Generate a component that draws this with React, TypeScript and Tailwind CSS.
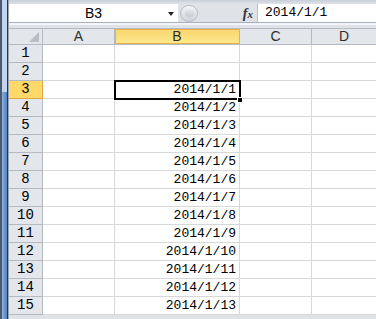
const cols = [
  { key: "A", w: "w-[72px]" },
  { key: "B", w: "w-[125px]" },
  { key: "C", w: "w-[72px]" },
];

const rows = Array.from({ length: 15 }, (_, i) => i + 1);

const cellText = (r: number) => (r >= 3 ? `2014/1/${r - 2}` : "");

const mono = "font-['Liberation_Mono',monospace] text-[13px] text-black";
const sans = "font-['Liberation_Sans',Arial,sans-serif]";

function FormulaBar() {
  return (
    <div className="bg-[#dfe3e8]">
      <div className="h-[4px] bg-gradient-to-b from-[#c9cfd8] to-[#dfe3e8]" />
      <div className="flex h-[18px] items-stretch">
        <div className="relative flex w-[169px] items-center justify-center bg-white">
          <span className={`${sans} text-[14px] text-black`}>B3</span>
          <span className="absolute right-[4px] top-[8px] h-0 w-0 border-x-[3.5px] border-t-[4px] border-x-transparent border-t-[#222]" />
        </div>
        <div className="flex w-[79px] items-center pl-[2px]">
          <div className="flex h-[17px] w-[18px] items-center justify-center rounded-full border border-[#b6bcc4] bg-gradient-to-b from-[#f4f5f7] to-[#cfd4da]">
            <div className="h-[8px] w-[9px] rounded-full bg-gradient-to-b from-[#e9ebee] to-[#c4c9d0]" />
          </div>
          <span className="ml-auto mr-[4px] font-['Liberation_Serif',serif] text-[14px] font-bold italic text-[#333]">
            f<span className="text-[11px]">x</span>
          </span>
        </div>
        <div className="flex flex-1 items-center border-l border-[#b9c0c9] bg-white pl-[7px]">
          <span className={mono}>2014/1/1</span>
        </div>
      </div>
      <div className="h-[1px] bg-[#a9b1bc]" />
      <div className="h-[2px] bg-[#f2f4f7]" />
      <div className="h-[3px] bg-[#dfe3e8]" />
    </div>
  );
}

function HeaderRow() {
  return (
    <div className="flex h-[17px] border-y border-[#b4bac2] bg-[#e3e6ea]">
      <div className="relative w-[34px] border-r border-[#b4bac2]">
        <svg className="absolute bottom-[2px] right-[3px]" width="10" height="10" viewBox="0 0 10 10">
          <polygon points="10,0 10,10 0,10" fill="#b9bec5" />
        </svg>
      </div>
      {cols.map((c) => (
        <div
          key={c.key}
          className={`${c.w} flex items-center justify-center border-r ${
            c.key === "B"
              ? "border-[#e2a63e] bg-gradient-to-b from-[#f9d56e] to-[#fde88d] outline outline-1 -outline-offset-1 outline-[#e8b04a]"
              : "border-[#b4bac2]"
          } ${sans} text-[14px] text-[#2e2e2e]`}
        >
          {c.key}
        </div>
      ))}
      <div className={`flex flex-1 items-center justify-center ${sans} text-[14px] text-[#2e2e2e]`}>D</div>
    </div>
  );
}

function Row({ r }: { r: number }) {
  const sel = r === 3;
  return (
    <div className="flex h-[18px]">
      <div
        className={`flex w-[34px] items-center justify-center border-b border-r ${
          sel ? "border-[#e2a63e] bg-[#fed868]" : "border-[#b4bac2] bg-[#e3e6ea]"
        } ${mono} text-[14px] text-[#222]`}
      >
        {r}
      </div>
      {cols.map((c) => (
        <div
          key={c.key}
          className={`${c.w} flex items-center justify-end border-b border-r border-[#d8d8d8] bg-white pr-[3px] ${mono}`}
        >
          {c.key === "B" ? cellText(r) : ""}
        </div>
      ))}
      <div className="flex-1 border-b border-[#d8d8d8] bg-white" />
    </div>
  );
}

export default function App() {
  return (
    <div className="relative flex h-[319px] w-[376px] overflow-hidden bg-[#dfe3e8]">
      <div className="flex w-[9px] shrink-0">
        <div className="w-[2px] bg-[#4b5a6e]" />
        <div className="flex w-[5px] flex-col">
          <div className="h-[92px] bg-[#c3d5ee]" />
          <div className="flex-1 bg-gradient-to-r from-[#8fb0dd] to-[#4f7fc4]" />
        </div>
        <div className="w-[1px] bg-[#26364c]" />
        <div className="w-[1px] bg-[#9aa3ae]" />
      </div>
      <div className="flex flex-1 flex-col">
        <FormulaBar />
        <HeaderRow />
        {rows.map((r) => (
          <Row key={r} r={r} />
        ))}
      </div>
      <div className="pointer-events-none absolute left-[114px] top-[80px] h-[20px] w-[127px] border-2 border-black" />
      <div className="pointer-events-none absolute left-[237px] top-[97px] h-[6px] w-[6px] border border-white bg-black" />
    </div>
  );
}
